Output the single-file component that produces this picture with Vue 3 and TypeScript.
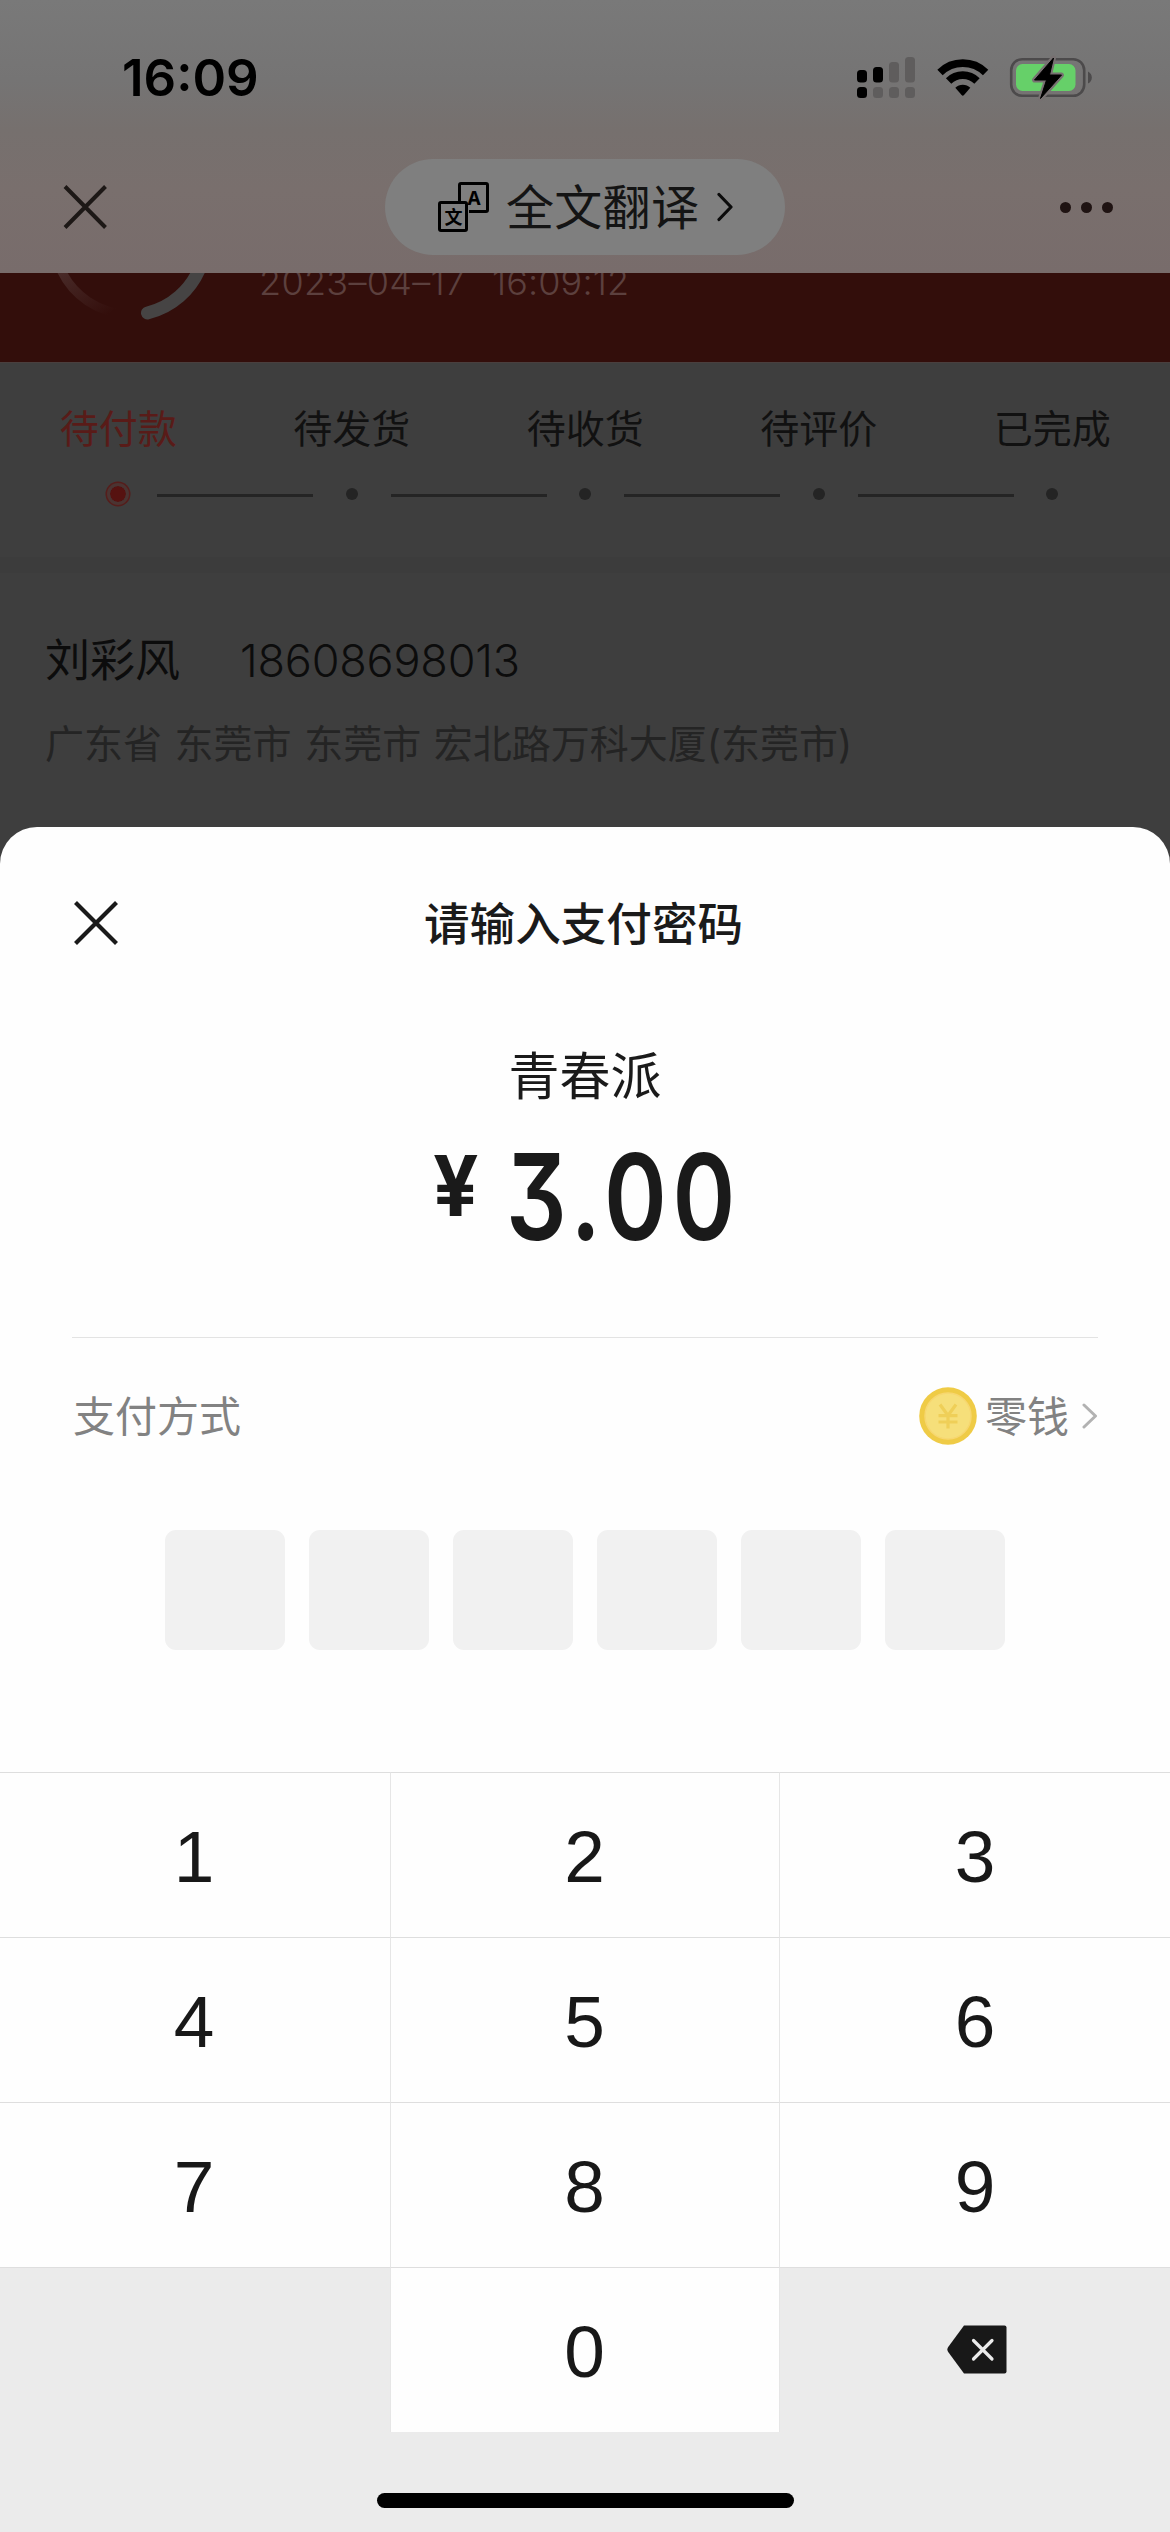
<script setup lang="ts">
interface Step {
  label: string
  active: boolean
}

const steps: Step[] = [
  { label: '待付款', active: true },
  { label: '待发货', active: false },
  { label: '待收货', active: false },
  { label: '待评价', active: false },
  { label: '已完成', active: false },
]

const keys: string[] = ['1', '2', '3', '4', '5', '6', '7', '8', '9']
const passwordLength = 6
</script>

<template>
  <div class="screen">
    <header class="top">
      <div class="status">
        <span class="clock">16:09</span>
        <svg class="indicators" width="240" height="50" viewBox="0 0 240 50">
          <g fill="#000">
            <rect x="5" y="18" width="10" height="12.500" rx="3.500" />
            <rect x="21" y="15" width="10" height="15.500" rx="3.500" />
            <rect x="5" y="35" width="10" height="11" rx="3.500" />
          </g>
          <g fill="#5f5d5d">
            <rect x="37" y="10" width="10" height="20.500" rx="3.500" />
            <rect x="53" y="5" width="10" height="25.500" rx="3.500" />
            <rect x="21" y="35" width="10" height="11" rx="3.500" />
            <rect x="37" y="35" width="10" height="11" rx="3.500" />
            <rect x="53" y="35" width="10" height="11" rx="3.500" />
          </g>
          <g fill="none" stroke="#000" stroke-width="7.600">
            <path d="M88 20.500a32.500 32.500 0 0 1 45.600 0" />
            <path d="M96.600 29a20.200 20.200 0 0 1 28.400 0" />
          </g>
          <path d="M103.300 35.800a10.600 10.600 0 0 1 15 0l-6.300 7.200q-1.200 1.300-2.400 0z" fill="#000" />
          <rect x="159.200" y="7.200" width="73" height="36.600" rx="11" fill="none" stroke="#4c4a4b" stroke-width="2.600" />
          <rect x="164" y="12" width="59.500" height="27" rx="6.500" fill="#66d069" />
          <path d="M236 19.500q3.800 2 3.800 6t-3.800 6z" fill="#4c4a4b" />
          <path d="M201.500 6L182.500 28h12l-6 18.500L209.500 23h-12z" fill="#000" stroke="#777071" stroke-width="5" stroke-linejoin="round" />
          <path d="M201.500 6L182.500 28h12l-6 18.500L209.500 23h-12z" fill="#000" stroke="#000" stroke-width="1" stroke-linejoin="round" />
        </svg>
      </div>
      <div class="nav">
        <svg class="nav-close" width="44" height="46" viewBox="0 0 44 46">
          <path d="M2 2.500L42.500 43.500M42.500 2.500L2 43.500" fill="none" stroke="#1d1816" stroke-width="4" />
        </svg>
        <div class="translate">
          <svg width="52" height="52" viewBox="0 0 52 52">
            <path d="M21.500 20.500V4q0-1.500 1.500-1.500h25q1.500 0 1.500 1.500v25q0 1.500-1.500 1.500h-17" fill="none" stroke="#000" stroke-width="3" />
            <rect x="1.500" y="21.500" width="27" height="28" rx="1.500" fill="none" stroke="#000" stroke-width="3" />
            <text x="36" y="23.500" class="glyph-a">A</text>
            <text x="15.500" y="42.500" class="glyph-wen">文</text>
          </svg>
          <span class="translate-label">全文翻译</span>
          <svg width="16" height="30" viewBox="0 0 16 30">
            <path d="M2 2.500L14 15L2 27.500" fill="none" stroke="#0b0b0b" stroke-width="3.200" stroke-linecap="round" stroke-linejoin="round" />
          </svg>
        </div>
        <div class="more"><i></i><i></i><i></i></div>
      </div>
    </header>

    <section class="banner">
      <svg class="ring" width="170" height="89" viewBox="0 0 170 89">
        <defs>
          <linearGradient id="ringFade" x1="0" y1="0" x2="1" y2="1">
            <stop offset="0" stop-color="#4a2c2a" />
            <stop offset="0.850" stop-color="#330e0b" />
          </linearGradient>
        </defs>
        <path d="M15.800 -6A76 76 0 0 0 86 41" fill="none" stroke="url(#ringFade)" stroke-width="9" />
        <path d="M156.200 -6A76 76 0 0 1 103.500 40" fill="none" stroke="#464444" stroke-width="13" stroke-linecap="round" />
      </svg>
      <span class="date">2023–04–17</span>
      <span class="time">16:09:12</span>
    </section>

    <section class="steps">
      <div v-for="step in steps" :key="step.label" class="step" :class="{ active: step.active }">
        <span class="step-label">{{ step.label }}</span>
        <div class="track"><b class="dot"></b></div>
        <i class="line"></i>
      </div>
    </section>
    <div class="divider-band"></div>

    <section class="address">
      <div class="person">
        <span class="name">刘彩风</span>
        <span class="phone">18608698013</span>
      </div>
      <div class="place">广东省 东莞市 东莞市 宏北路万科大厦(东莞市)</div>
    </section>

    <main class="sheet">
      <div class="sheet-head">
        <svg class="sheet-close" width="44" height="44" viewBox="0 0 44 44">
          <path d="M1.500 1.500L42.500 42.500M42.500 1.500L1.500 42.500" fill="none" stroke="#1a1a1a" stroke-width="4.200" />
        </svg>
        <h1>请输入支付密码</h1>
      </div>
      <div class="merchant">青春派</div>
      <div class="amount">
        <span class="currency">¥</span>
        <span class="value">3.00</span>
      </div>
      <div class="method">
        <span class="method-label">支付方式</span>
        <svg class="coin" width="58" height="58" viewBox="0 0 58 58">
          <circle cx="29" cy="29" r="28.800" fill="#efcb46" />
          <circle cx="29" cy="29" r="23" fill="#f6df7a" stroke="#f7d770" stroke-width="1.500" />
          <path d="M21 17.500L29 28.500L37 17.500M29 28V41.500M19.500 28.700H38.500M19.500 35H38.500" fill="none" stroke="#efcf58" stroke-width="3.200" />
        </svg>
        <span class="method-value">零钱</span>
        <svg class="method-arrow" width="16" height="26" viewBox="0 0 16 26">
          <path d="M2 2L13.500 13L2 24" fill="none" stroke="#b2b2b2" stroke-width="3" stroke-linecap="round" stroke-linejoin="round" />
        </svg>
      </div>
      <div class="password">
        <i v-for="n in passwordLength" :key="n"></i>
      </div>

      <div class="keypad">
        <div v-for="k in keys" :key="k" class="key"><span>{{ k }}</span></div>
        <div class="key blank"></div>
        <div class="key"><span>0</span></div>
        <div class="key blank">
          <svg class="backspace" width="60" height="49" viewBox="0 0 60 49">
            <path d="M17 0.500H57.500Q59.500 0.500 59.500 2.500V46.500Q59.500 48.500 57.500 48.500H17L1.200 27Q-0.500 24.500 1.200 22Z" fill="#181818" />
            <path d="M26.500 15.500L45 34M45 15.500L26.500 34" fill="none" stroke="#ebebeb" stroke-width="3.200" stroke-linecap="round" />
          </svg>
        </div>
      </div>
      <div class="home"><i></i></div>
    </main>
  </div>
</template>

<style>
html,
body {
  margin: 0;
  background: #3e3e3e;
}
</style>

<style scoped>
.screen {
  width: 1170px;
  height: 2532px;
  overflow: hidden;
  display: flex;
  flex-direction: column;
  background: #3e3e3e;
  font-family: Inter, "Noto Sans CJK SC", sans-serif;
  color: #1a1a1a;
}

.top {
  height: 273px;
  flex: none;
  background: linear-gradient(#797979 0, #757474 80px, #76706e 130px, #796f6d 190px, #786c6b 273px);
}
.status {
  height: 159px;
  display: flex;
  justify-content: space-between;
  padding: 0 78px 0 122px;
}
.clock {
  font-size: 51px;
  font-weight: 600;
  line-height: 62px;
  margin-top: 47px;
  color: #000;
}
.indicators {
  margin-top: 52px;
  flex: none;
}
.nav {
  display: flex;
  align-items: center;
  height: 96px;
  padding: 0 57px 0 63px;
}
.translate {
  box-sizing: border-box;
  width: 400px;
  height: 96px;
  margin-left: 278px;
  padding: 0 50px 0 53px;
  border-radius: 48px;
  background: #7f7f7f;
  display: flex;
  align-items: center;
}
.glyph-a {
  font: 700 19px "Noto Sans", sans-serif;
  text-anchor: middle;
}
.glyph-wen {
  font: 700 18px "Noto Sans CJK SC", sans-serif;
  text-anchor: middle;
}
.translate-label {
  margin: 2px 18px 0 16px;
  font-size: 48px;
  line-height: 60px;
  letter-spacing: 0.300px;
  color: #141414;
}
.more {
  display: flex;
  gap: 10px;
  margin-left: auto;
}
.more i {
  width: 11px;
  height: 11px;
  border-radius: 50%;
  background: #1f1312;
}

.banner {
  height: 89px;
  flex: none;
  display: flex;
  background: #330e0b;
  overflow: hidden;
  color: #5c403e;
  font-size: 36px;
  font-weight: 300;
  line-height: 44px;
}
.ring {
  flex: none;
  margin-left: 44px;
}
.date,
.time {
  margin-top: -13px;
}
.date {
  width: 206px;
  margin-left: 45px;
  letter-spacing: 0.300px;
  white-space: nowrap;
}
.time {
  margin-left: 27px;
  letter-spacing: 0.100px;
}

.steps {
  height: 195px;
  flex: none;
  display: flex;
  padding-left: 1.500px;
  box-shadow: inset 0 1px 0 #4a3f3e;
}
.step {
  position: relative;
  width: 233.500px;
  flex: none;
  display: flex;
  flex-direction: column;
  align-items: center;
  padding-top: 43px;
}
.step-label {
  font-size: 39px;
  line-height: 48px;
  color: #111;
}
.track {
  height: 26px;
  margin-top: 28px;
  display: flex;
  align-items: center;
}
.dot {
  width: 12px;
  height: 12px;
  border-radius: 50%;
  background: #242424;
}
.line {
  position: absolute;
  left: 155.500px;
  top: 132px;
  width: 156px;
  height: 3px;
  background: #242424;
}
.step:last-child .line {
  display: none;
}
.active .step-label {
  color: #591b18;
}
.active .dot {
  width: 16px;
  height: 16px;
  border: 3px solid #4b3432;
  background: #561210;
  background-clip: padding-box;
  box-shadow: 0 0 0 1.500px #561d1b;
}
.divider-band {
  height: 16px;
  flex: none;
  background: #3c3c3c;
}

.address {
  height: 254px;
  flex: none;
  padding-left: 45px;
}
.person {
  display: flex;
  align-items: center;
  height: 60px;
  padding-top: 58px;
  color: #0c0c0c;
  font-size: 45px;
  line-height: 60px;
}
.name {
  width: 195px;
}
.phone {
  font-weight: 350;
  letter-spacing: -0.200px;
}
.place {
  margin-top: 25px;
  font-size: 39px;
  line-height: 56px;
  word-spacing: 1.600px;
  color: #242424;
  white-space: nowrap;
}

.sheet {
  height: 1705px;
  flex: none;
  display: flex;
  flex-direction: column;
  border-radius: 37px 37px 0 0;
  background: #fefefe;
  overflow: hidden;
}
.sheet-head {
  display: flex;
  align-items: center;
  height: 60px;
  margin-top: 66px;
  padding-left: 74px;
}
h1 {
  margin: 3px 0 0 306px;
  font-size: 45.600px;
  line-height: 60px;
  font-weight: 500;
}
.merchant {
  margin-top: 88px;
  text-align: center;
  font-size: 51px;
  line-height: 72px;
}
.amount {
  display: flex;
  align-items: flex-start;
  height: 224px;
}
.currency {
  width: 60px;
  margin: 23px 0 0 433px;
  font-size: 84px;
  line-height: 100px;
  font-weight: 700;
  transform: scaleX(0.95);
  transform-origin: left;
}
.value {
  margin: 14px 0 0 13px;
  font-size: 119px;
  line-height: 140px;
  font-weight: 600;
  font-feature-settings: "cv09";
  letter-spacing: 7.200px;
  transform: scaleX(0.8);
  transform-origin: left;
}
.method {
  display: flex;
  align-items: center;
  height: 156px;
  margin: 0 72px;
  border-top: 1px solid #e3e3e3;
  color: #828282;
  font-size: 42px;
  line-height: 56px;
}
.method-label {
  margin: 2px 0 0 1px;
}
.coin {
  margin-left: auto;
}
.method-value {
  margin: 2px 13px 0 8px;
}
.password {
  display: flex;
  justify-content: center;
  gap: 24px;
  margin-top: 36px;
}
.password i {
  width: 120px;
  height: 120px;
  border-radius: 11px;
  background: #f1f1f1;
}
.keypad {
  display: grid;
  grid-template-columns: 391px 389px 390px;
  grid-auto-rows: 165px;
  margin-top: 122px;
}
.key {
  display: flex;
  align-items: center;
  justify-content: center;
  box-sizing: border-box;
  border-top: 1px solid #dedede;
  border-right: 1px solid #e6e6e6;
  font-family: "Liberation Sans", Arial, sans-serif;
  font-size: 73px;
  line-height: 84px;
  color: #181818;
}
.key:nth-child(3n) {
  border-right: 0;
}
.key:nth-child(3n + 1) span {
  margin-right: 2px;
}
.key:nth-child(3n + 2) span {
  margin-right: 1px;
}
.key span {
  margin-top: 3px;
}
.key.blank {
  background: #ebebeb;
}
.backspace {
  margin: 0 0 1px 3px;
}
.home {
  flex: 1;
  display: flex;
  align-items: flex-start;
  justify-content: center;
  background: #ebebeb;
}
.home i {
  width: 417px;
  height: 15px;
  margin-top: 61px;
  border-radius: 8px;
  background: #000;
}
</style>
